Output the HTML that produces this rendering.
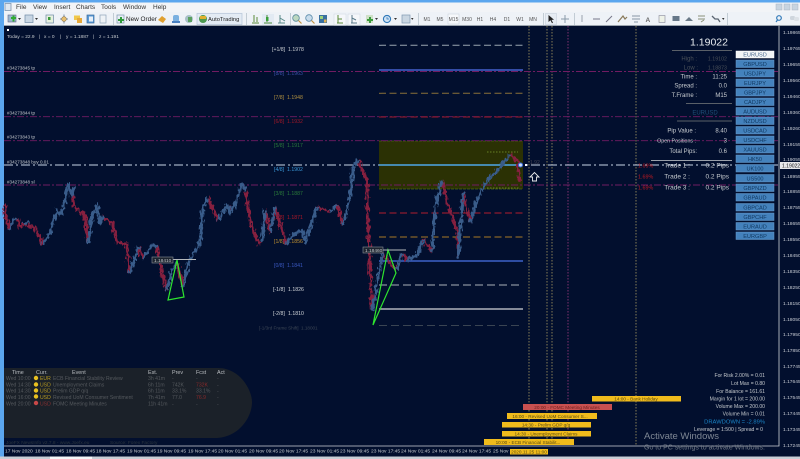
<!DOCTYPE html>
<html><head><meta charset="utf-8"><style>
html,body{margin:0;padding:0;background:#020f2e;overflow:hidden}
svg{display:block;filter:blur(.3px)}
text{font-family:"Liberation Sans",sans-serif}
.m{font-size:6.5px;fill:#333}
.ax{font-family:"Liberation Serif",serif;font-size:4.9px;fill:#c8ccd4}
.t{font-size:4.9px;fill:#c8ccd0;font-family:"Liberation Serif",serif}
.p{font-size:6px;fill:#c8ccd0}
.tf{font-size:5px;fill:#555;text-anchor:middle}
.b{font-size:5.6px;fill:#123a63;text-anchor:middle}
.bar{font-size:4.7px;fill:#5a4a10;text-anchor:middle}
.s{font-size:5.1px;fill:#c4c8cc;text-anchor:end}
.n{font-size:5.1px;fill:#55595e}
.nh{font-size:5.4px;fill:#b8bcc0}
.mu{font-size:5.2px}
</style></head><body>
<svg width="800" height="459" viewBox="0 0 800 459" xmlns="http://www.w3.org/2000/svg">
<defs><filter id="j" x="0" y="100" width="560" height="260" filterUnits="userSpaceOnUse" color-interpolation-filters="sRGB"><feTurbulence type="fractalNoise" baseFrequency="0.45 0.2" numOctaves="2" seed="4"/><feDisplacementMap in="SourceGraphic" scale="7" xChannelSelector="R" yChannelSelector="G"/></filter></defs>
<rect width="800" height="459" fill="#020f2e"/>
<rect width="800" height="2.500" fill="#5ba6ee"/>
<rect y="2.500" width="800" height="10" fill="#f2f4f7"/>
<rect y="12" width="800" height="13.500" fill="#eef2f7"/>
<rect y="25" width="800" height="1" fill="#9aa3ad"/>
<rect y="0" width="4" height="459" fill="#5ba6ee"/>
<text x="16" y="9" class="m">File</text><text x="33" y="9" class="m">View</text><text x="54" y="9" class="m">Insert</text><text x="76" y="9" class="m">Charts</text><text x="101" y="9" class="m">Tools</text><text x="123" y="9" class="m">Window</text><text x="153" y="9" class="m">Help</text>
<rect x="5" y="3.500" width="6" height="7" fill="#dfe7f0" stroke="#7f96b0" stroke-width=".8"/>
<!-- toolbar icons -->
<g>
<rect x="8" y="15" width="8" height="7" fill="#9cb8cf" stroke="#668" stroke-width=".6"/><path d="M11 17h5v2h-5zM12.500 15.500h2v6h-2z" fill="#2faa2f"/><path d="M18 18h3l-1.500 2z" fill="#333"/>
<rect x="25" y="15" width="8" height="7.500" fill="#c8d6e4" stroke="#6f8aa5" stroke-width=".7"/><path d="M35 18h3l-1.500 2z" fill="#333"/>
<rect x="46" y="15" width="7.500" height="8" fill="#e6f0e0" stroke="#6f8aa5" stroke-width=".7"/><rect x="48" y="17" width="2.500" height="3" fill="#3a9a3a"/>
<path d="M64 14.500v9M60 19h8" stroke="#7a8fa5" stroke-width="1"/><circle cx="64" cy="19" r="2.300" fill="#e8c070" stroke="#8a7040" stroke-width=".6"/>
<rect x="74" y="15.500" width="6" height="4.500" fill="#f0c84a"/><rect x="77" y="18" width="5" height="5" fill="#e6a83a"/>
<rect x="87" y="15" width="7" height="8" fill="#5a9ad8" stroke="#3a6a9a" stroke-width=".7"/><rect x="89" y="16.500" width="4" height="5" fill="#e8f0f8"/>
<rect x="100" y="15" width="6" height="8" fill="#eef2f6" stroke="#8fa3b8" stroke-width=".7"/>
<rect x="113" y="13" width=".8" height="12" fill="#b8c2cc"/>
<rect x="117" y="15" width="7" height="8" fill="#e6eef4" stroke="#7f96b0" stroke-width=".7"/><path d="M118 19h6v2h-6zM120 17h2v6h-2z" fill="#2f9a3a"/>
<text x="126" y="21" font-size="6.400" fill="#222">New Order</text>
<path d="M158 20l4-4 4 3-3 4z" fill="#e0a030"/><rect x="173" y="15" width="6" height="7" rx="2" fill="#7ab0e0"/><rect x="172" y="21" width="8" height="2" fill="#4a80c0"/>
<circle cx="189" cy="19" r="4" fill="#a8c0c8"/><rect x="188" y="17" width="4" height="5" fill="#5aa060"/>
<rect x="197" y="13.500" width="45" height="11" fill="#e3ebf4" stroke="#b4c4d6" stroke-width=".7"/>
<circle cx="203" cy="19" r="4" fill="#4d9a50"/><path d="M200 16h6v3h-6z" fill="#e0b030"/>
<text x="208" y="21" font-size="5.800" fill="#222">AutoTrading</text>
<rect x="246" y="13" width=".8" height="12" fill="#b8c2cc"/>
<path d="M252 23h7M254 15v7M257 17v5" stroke="#5a8a3a" stroke-width="1" fill="none"/>
<rect x="262" y="14" width="12" height="11" fill="#e2eaf3"/><path d="M264 23h8M267 15v7" stroke="#4a8a3a" stroke-width="1"/><rect x="266" y="17" width="2.500" height="4" fill="#3aa03a"/>
<path d="M278 23h7M280 15v8M280 18l5 3" stroke="#5a8a8a" stroke-width="1" fill="none"/>
<rect x="290" y="13" width=".8" height="12" fill="#b8c2cc"/>
<circle cx="296" cy="18" r="3.300" fill="#bcd8c0" stroke="#5a8a9a" stroke-width=".8"/><path d="M298.500 20.500l3 3" stroke="#c09040" stroke-width="1.200"/>
<circle cx="309" cy="18" r="3.300" fill="#c8dcec" stroke="#5a8aaa" stroke-width=".8"/><path d="M311.500 20.500l3 3" stroke="#c09040" stroke-width="1.200"/>
<rect x="319" y="15" width="8" height="8" fill="#3a70a0"/><rect x="320" y="16" width="3" height="3" fill="#9ad07a"/><rect x="324" y="19.500" width="2.500" height="3" fill="#e0b050"/>
<rect x="334" y="14" width="12" height="11" fill="#f5f7fa" stroke="#ccd6e0" stroke-width=".5"/><path d="M337 23h6M338 15v8M338 19h4" stroke="#5a8a3a" stroke-width="1" fill="none"/>
<rect x="348" y="14" width="12" height="11" fill="#f5f7fa" stroke="#ccd6e0" stroke-width=".5"/><path d="M351 23h6M352 15v8M352 18l4 2" stroke="#5a7a8a" stroke-width="1" fill="none"/>
<rect x="366" y="15" width="7" height="8" fill="#cfe0c8"/><path d="M367 19h6v2h-6zM369 17h2v6h-2z" fill="#3a9a3a"/><path d="M375 18h3l-1.500 2z" fill="#333"/>
<circle cx="387" cy="19" r="3.600" fill="#cfe2f4" stroke="#2f78b8" stroke-width="1.100"/><path d="M387 17v2h2" stroke="#2f78b8" stroke-width=".7" fill="none"/><path d="M394 18h3l-1.500 2z" fill="#333"/>
<rect x="402" y="15" width="8" height="8" fill="#c9d6e2" stroke="#7f96b0" stroke-width=".7"/><path d="M411 18h2.500l-1.200 2z" fill="#333"/>
<rect x="418" y="13" width=".8" height="12" fill="#b8c2cc"/>
<rect x="448" y="14" width="11" height="10" fill="#f6f8fb" stroke="#c4ced9" stroke-width=".5"/>
<rect x="543" y="13" width=".8" height="12" fill="#b8c2cc"/>
<rect x="545.500" y="13.500" width="11" height="11" fill="#e6ecf3" stroke="#c0cad6" stroke-width=".5"/><path d="M548.500 15v7l2-1.800 1.500 3 1-.5-1.500-2.800 2.500-.2z" fill="#222"/>
<path d="M565 15v8M561 19h8" stroke="#8a9aa8" stroke-width="1"/>
<rect x="574" y="13" width=".8" height="12" fill="#b8c2cc"/>
<path d="M582 15v7" stroke="#99a3ad"/><path d="M593 19h7" stroke="#778" stroke-width="1"/><path d="M606 22l6-6" stroke="#778" stroke-width="1"/>
<path d="M618 22l5-6 2 3 2-2" stroke="#8a7a5a" stroke-width="1.200" fill="none"/>
<path d="M632 16h8M632 19h8M634 22h4" stroke="#8896a5" stroke-width="1"/>
<text x="645.500" y="22" font-size="6.500" fill="#666" font-weight="bold">A</text>
<rect x="659" y="15.500" width="6" height="7" fill="#eef2e8" stroke="#889" stroke-width=".6"/>
<rect x="672.500" y="16" width="7" height="5" fill="#667788"/><path d="M685 21l4-4 4 4z" fill="#6b7a88"/>
<path d="M698 16h7M698 19h7M701 22l3-2" stroke="#8a9078" stroke-width="1" fill="none"/>
<path d="M712 16l3 3 3 0 2 3" stroke="#5a6470" stroke-width="1.300" fill="none"/><path d="M722 18h2.500l-1.200 2z" fill="#333"/>
<rect x="727" y="13" width=".8" height="12" fill="#b8c2cc"/>
<circle cx="779" cy="18" r="2.300" fill="none" stroke="#2f78b8" stroke-width="1.200"/><path d="M777.500 20l-1.500 2" stroke="#2f78b8" stroke-width="1.200"/>
<rect x="790" y="16" width="5" height="4" rx="1.500" fill="#cfd6dd"/><rect x="794" y="17" width="5" height="4" rx="1.500" fill="#dde2e7"/>
</g>
<g fill="#c8d4e0" stroke="#a8b4c2" stroke-width=".5"><rect x="776" y="4" width="6" height="6"/><rect x="784" y="4" width="6" height="6"/><rect x="792" y="4" width="6" height="6"/></g>
<text x="427" y="21" class="tf">M1</text><text x="440" y="21" class="tf">M5</text><text x="453.500" y="21" class="tf">M15</text><text x="467" y="21" class="tf">M30</text><text x="480" y="21" class="tf">H1</text><text x="493" y="21" class="tf">H4</text><text x="507" y="21" class="tf">D1</text><text x="520" y="21" class="tf">W1</text><text x="533" y="21" class="tf">MN</text>

<!-- news panel -->
<path d="M4 368H218C240 368 252 390 252 402C252 418 238 438 215 438H4Z" fill="#1b2129"/>

<!-- olive rect -->
<rect x="379" y="141" width="144" height="48" fill="#2b3104"/>
<path d="M379 141H523M379 189H523" stroke="#4d6a14" stroke-width=".8" stroke-dasharray="3 1"/>

<!-- vertical lines -->
<g fill="none" stroke-width=".8" stroke-dasharray="1.500 1.500">
<path d="M529 26V445M547 26V445M552 26V445M636 26V445" stroke="#a89a60"/>
<path d="M568 26V445" stroke="#a03a80"/>
</g>

<!-- horizontal order lines -->
<g fill="none" stroke-width=".9" stroke-dasharray="7 2 2 2">
<path d="M4 71.500H779M4 116.700H779M4 140.700H779M4 185H779" stroke="#701c62"/>
</g>
<path d="M4 165H779" fill="none" stroke="#c8d4e6" stroke-width=".9" stroke-dasharray="9 3 2 3"/>
<g font-size="4.600" fill="#c4c8cc"><text x="7" y="69.500">#34273845 tp</text><text x="7" y="114.500">#34273844 tp</text><text x="7" y="138.500">#34273843 tp</text><text x="7" y="163.500">#34273848 buy 0.01</text><text x="7" y="183.500">#34273848 sl</text></g>

<!-- murrey lines -->
<g fill="none">
<path d="M379 45.300H523" stroke="#9aa5b0" stroke-dasharray="7 3.500"/>
<path d="M379 70H523" stroke="#3c55b8" stroke-width="1.800"/>
<path d="M379 93.300H523" stroke="#8a7038" stroke-dasharray="7 3.500"/>
<path d="M379 117H523" stroke="#a01a2a" stroke-dasharray="7 3.500"/>
<path d="M379 165H523" stroke="#4ea8e8" stroke-width="1.500"/>
<path d="M379 213H523" stroke="#b01e2e" stroke-dasharray="7 3.500"/>
<path d="M379 237H523" stroke="#a87a26" stroke-dasharray="7 3.500"/>
<path d="M379 261H523" stroke="#3c62c8" stroke-width="1.600"/>
<path d="M379 285H523" stroke="#aab0b8" stroke-dasharray="8 4"/>
<path d="M379 309H523" stroke="#b0b4bc" stroke-width="1.600"/>
<path d="M379 325.500H523" stroke="#3a4452" stroke-dasharray="8 4"/>
<path d="M487 152H518M487 188H520" stroke="#7a9a30" stroke-width=".7" stroke-dasharray="1.500 1.500"/>
</g>
<g class="mu">
<text y="51" fill="#c8ccd0"><tspan x="272">[+1/8]</tspan><tspan x="288">1.1978</tspan></text>
<text y="75" fill="#3a50a8"><tspan x="274">[8/8]</tspan><tspan x="287">1.1963</tspan></text>
<text y="99" fill="#b09040"><tspan x="274">[7/8]</tspan><tspan x="287">1.1948</tspan></text>
<text y="123" fill="#a01828"><tspan x="274">[6/8]</tspan><tspan x="287">1.1932</tspan></text>
<text y="147" fill="#2a7a3a"><tspan x="274">[5/8]</tspan><tspan x="287">1.1917</tspan></text>
<text y="171" fill="#3a98d8"><tspan x="274">[4/8]</tspan><tspan x="287">1.1902</tspan></text>
<text y="195" fill="#2a7a3a"><tspan x="274">[3/8]</tspan><tspan x="287">1.1887</tspan></text>
<text y="219" fill="#b01828"><tspan x="274">[2/8]</tspan><tspan x="287">1.1871</tspan></text>
<text y="243" fill="#c09030"><tspan x="274">[1/8]</tspan><tspan x="287">1.1856</tspan></text>
<text y="267" fill="#3a58c0"><tspan x="274">[0/8]</tspan><tspan x="287">1.1841</tspan></text>
<text y="291" fill="#d0d4d8"><tspan x="273">[-1/8]</tspan><tspan x="288">1.1826</tspan></text>
<text y="315" fill="#d0d4d8"><tspan x="273">[-2/8]</tspan><tspan x="288">1.1810</tspan></text>
<text y="329.500" fill="#3c4655" font-size="4.600"><tspan x="259">[-1/3rd Frame Shift]</tspan><tspan x="301">1.18001</tspan></text>
</g>

<!-- price -->
<g fill="none" stroke-width="3" stroke-linejoin="round" stroke-linecap="butt" filter="url(#j)">
<g stroke="#85203f">
<path d="M5 205L6 217L9 230M17 218L20 227L24 224L35 228L43 245"/>
<path d="M72 195L74 205L80 213L84 212L88 243"/>
<path d="M103 217L112 223L117 243L127 243L129 273"/>
<path d="M138 247L143 258M157 247L162 273L167 290M177 262L183 287"/>
<path d="M208 198L218 220M230 213L228 206M245 190L250 220L258 243L262 242"/>
<path d="M265 210L270 233M275 208L287 245"/>
<path d="M317 207L330 212M337 205L343 225"/>
<path d="M358 160L367 180L368 230L372 310"/>
<path d="M383 253L390 263L397 270M402 253L407 260M423 240L432 252"/>
<path d="M442 180L447 203L457 230L458 258"/>
<path d="M463 193L470 222"/>
<path d="M510 155L517 160L520 182"/>
</g>
<g stroke="#395c8a">
<path d="M9 230L13 220L17 218M24 224L28 222"/>
<path d="M43 245L50 232L57 210L60 214L62 213L68 185L72 195L74 187"/>
<path d="M88 243L92 217L97 205L100 223L103 217"/>
<path d="M129 273L135 260L138 247M143 258L152 245L157 247"/>
<path d="M167 290L172 270L177 262M183 287L188 263L200 243L203 207L208 198"/>
<path d="M218 220L227 205L230 213L237 200L242 183L245 190"/>
<path d="M262 242L265 210M270 233L275 208M287 245L290 237L302 230L305 243L317 207"/>
<path d="M330 212L337 205M343 225L350 197L353 167L358 160"/>
<path d="M372 310L378 277L383 253M397 270L402 253M407 260L417 255L423 240"/>
<path d="M432 252L435 207L442 180M458 258L463 193M470 222L477 200L483 187L490 178L500 167L510 155"/>
</g>
</g>

<!-- triangles -->
<g fill="none" stroke="#2ee62e" stroke-width="1.200">
<path d="M168 300L177 260L184 297Z"/>
<path d="M373 325L388 250L396 273Z"/>
</g>
<path d="M173 259.500H196M383 250H406" stroke="#b4b8bc"/>
<rect x="152" y="257" width="21" height="6" fill="#1c2430" stroke="#8a9098" stroke-width=".6"/>
<text x="154" y="262" font-size="4.800" fill="#c0c4c8">1.18410</text>
<rect x="363" y="247" width="20" height="6" fill="#1c2430" stroke="#8a9098" stroke-width=".6"/>
<text x="365" y="252" font-size="4.800" fill="#c0c4c8">1.18460</text>

<circle cx="520.500" cy="165" r="2" fill="#cde" stroke="#3a6ae0"/>
<rect x="525" y="164" width="2" height="2" fill="#fff"/>
<text x="530" y="164" font-size="5" fill="#445">1.92</text>
<path d="M534.500 172.500l-4.500 4.500h2.500v4h4v-4h2.500z" fill="#020f2e" stroke="#e8eaec" stroke-width=".9"/>

<!-- info top-left -->
<rect x="7" y="29" width="2" height="2" fill="#fff"/>
<g font-size="4.800" fill="#c8ccd0"><text x="7" y="38">Today = 22.9</text><text x="39" y="38">|</text><text x="44" y="38">x = 0</text><text x="60" y="38">|</text><text x="66" y="38">y = 1.1887</text><text x="93" y="38">|</text><text x="99" y="38">z = 1.191</text></g>

<!-- right panel -->
<text x="709" y="45.500" font-size="10.500" fill="#e8ecf0" text-anchor="middle">1.19022</text>
<g fill="#5a6068"><rect x="672" y="50" width="60" height="1"/><rect x="686" y="103" width="46" height="1"/><rect x="677" y="120.500" width="55" height="1"/></g>
<rect x="651" y="160" width="81" height=".8" fill="#c0c4c8"/>
<g class="p" text-anchor="end">
<text x="697" y="60.500" fill="#4a5058">High :</text><text x="698" y="69.500" fill="#4a5058">Low :</text>
<text x="697" y="78.500">Time :</text><text x="697" y="87.500">Spread :</text><text x="697" y="97">T.Frame :</text>
<text x="696" y="132.500">Pip Value :</text><text x="696" y="142.500" font-size="5.300">Open Positions :</text><text x="697" y="153">Total Pips:</text>
<text x="690" y="167.500" font-size="6.500">Trade 1 :</text><text x="690" y="178.500" font-size="6.500">Trade 2 :</text><text x="690" y="189.500" font-size="6.500">Trade 3 :</text>
</g>
<g class="p" text-anchor="end">
<text x="727" y="60.500" fill="#4a5058" font-size="5.300">1.19102</text><text x="727" y="69.500" fill="#4a5058" font-size="5.300">1.18873</text>
<text x="727" y="78.500">11:25</text><text x="727" y="87.500">0.0</text><text x="727" y="97">M15</text>
<text x="727" y="132.500">8.40</text><text x="727" y="142.500">3</text><text x="727" y="153">0.6</text>
<text x="729" y="167.500" font-size="6.500">0.2 Pips</text><text x="729" y="178.500" font-size="6.500">0.2 Pips</text><text x="729" y="189.500" font-size="6.500">0.2 Pips</text>
</g>
<text x="705" y="114.500" font-size="6" fill="#1f4f78" text-anchor="middle">EURUSD</text>
<g font-size="5.400" fill="#c01a22"><text x="638" y="167.500">1.69%</text><text x="638" y="178.500">1.69%</text><text x="638" y="189.500">1.69%</text></g>

<!-- buttons -->
<g fill="#4482bd" stroke="#6a9ccb" stroke-width=".5">
<rect x="736" y="51" width="38" height="7" fill="#f2f4f6" stroke="#fff"/>
<rect x="736" y="60" width="38" height="7.500"/><rect x="736" y="69.500" width="38" height="7.500"/><rect x="736" y="79" width="38" height="7.500"/><rect x="736" y="88.500" width="38" height="7.500"/><rect x="736" y="98" width="38" height="7.500"/><rect x="736" y="107.500" width="38" height="7.500"/><rect x="736" y="117" width="38" height="7.500"/><rect x="736" y="126.500" width="38" height="7.500"/><rect x="736" y="136" width="38" height="7.500"/><rect x="736" y="145.500" width="38" height="7.500"/><rect x="736" y="155" width="38" height="7.500"/><rect x="736" y="164.500" width="38" height="7.500"/><rect x="736" y="174.500" width="38" height="7.500"/><rect x="736" y="184" width="38" height="7.500"/><rect x="736" y="193.500" width="38" height="7.500"/><rect x="736" y="203.500" width="38" height="7.500"/><rect x="736" y="213" width="38" height="7.500"/><rect x="736" y="222.500" width="38" height="7.500"/><rect x="736" y="232" width="38" height="7.500"/>
</g>
<g class="b">
<text x="755" y="56.500" fill="#4a6a90">EURUSD</text><text x="755" y="66">GBPUSD</text><text x="755" y="75.500">USDJPY</text><text x="755" y="85">EURJPY</text><text x="755" y="94.500">GBPJPY</text><text x="755" y="104">CADJPY</text><text x="755" y="113.500">AUDUSD</text><text x="755" y="123">NZDUSD</text><text x="755" y="132.500">USDCAD</text><text x="755" y="142">USDCHF</text><text x="755" y="151.500">XAUUSD</text><text x="755" y="161">HK50</text><text x="755" y="170.500">UK100</text><text x="755" y="180.500">US500</text><text x="755" y="190">GBPNZD</text><text x="755" y="199.500">GBPAUD</text><text x="755" y="209.500">GBPCAD</text><text x="755" y="219">GBPCHF</text><text x="755" y="228.500">EURAUD</text><text x="755" y="238">EURGBP</text>
</g>

<!-- axis -->
<path d="M779 26V446H4" fill="none" stroke="#d0d4d8" stroke-width=".8"/>
<g class="ax">
<text x="783" y="34">1.19865</text><text x="783" y="50">1.19765</text><text x="783" y="66">1.19655</text><text x="783" y="82">1.19560</text><text x="783" y="98">1.19460</text><text x="783" y="114">1.19360</text><text x="783" y="130">1.19260</text><text x="783" y="146">1.19155</text><text x="783" y="161">1.19055</text><text x="783" y="178">1.18955</text><text x="783" y="193">1.18855</text><text x="783" y="209">1.18755</text><text x="783" y="225">1.18655</text><text x="783" y="241">1.18550</text><text x="783" y="257">1.18450</text><text x="783" y="273">1.18350</text><text x="783" y="289">1.18250</text><text x="783" y="305">1.18150</text><text x="783" y="321">1.18050</text><text x="783" y="336">1.17950</text><text x="783" y="352">1.17850</text><text x="783" y="368">1.17745</text><text x="783" y="383">1.17645</text><text x="783" y="399">1.17545</text><text x="783" y="415">1.17445</text><text x="783" y="431">1.17345</text><text x="783" y="447">1.17245</text>
</g>
<rect x="780" y="162" width="20" height="7" fill="#e8e8ec"/><text x="782" y="167.500" font-size="5" fill="#111" font-family="Liberation Serif">1.19022</text>

<g class="t">
<text x="5" y="452.500">17 Nov 2020</text><text x="35" y="452.500">18 Nov 01:45</text><text x="66" y="452.500">18 Nov 09:45</text><text x="96" y="452.500">18 Nov 17:45</text><text x="127" y="452.500">19 Nov 01:45</text><text x="157" y="452.500">19 Nov 09:45</text><text x="188" y="452.500">19 Nov 17:45</text><text x="218" y="452.500">20 Nov 01:45</text><text x="249" y="452.500">20 Nov 09:45</text><text x="279" y="452.500">20 Nov 17:45</text><text x="310" y="452.500">23 Nov 01:45</text><text x="340" y="452.500">23 Nov 09:45</text><text x="371" y="452.500">23 Nov 17:45</text><text x="401" y="452.500">24 Nov 01:45</text><text x="432" y="452.500">24 Nov 09:45</text><text x="462" y="452.500">24 Nov 17:45</text><text x="493" y="452.500">25 Nov</text>
</g>
<rect x="0" y="456.500" width="800" height="2.500" fill="#c8ced6"/><rect x="50" y="456.500" width="42" height="2.500" fill="#f4f6f8"/>

<!-- news -->
<g class="nh"><text x="12" y="374">Time</text><text x="36" y="374">Curr.</text><text x="72" y="374">Event</text><text x="148" y="374">Est.</text><text x="172" y="374">Prev</text><text x="196" y="374">Fcst</text><text x="217" y="374">Act</text></g>
<g fill="#e8c020"><circle cx="36" cy="378" r="2.200"/><circle cx="36" cy="384.500" r="2.200"/><circle cx="36" cy="390.500" r="2.200"/><circle cx="36" cy="396.500" r="2.200"/></g><circle cx="36" cy="403" r="2.200" fill="#c84848"/>
<g class="n">
<text x="6" y="380">Wed 10:00</text><text x="40" y="380" fill="#b89a20">EUR</text><text x="53" y="380">ECB Financial Stability Review</text><text x="148" y="380">3h 41m</text><text x="172" y="380">-</text><text x="196" y="380">-</text><text x="217" y="380">-</text>
<text x="6" y="386.500">Wed 14:30</text><text x="40" y="386.500" fill="#b89a20">USD</text><text x="53" y="386.500">Unemployment Claims</text><text x="148" y="386.500">6h 11m</text><text x="172" y="386.500">742K</text><text x="196" y="386.500" fill="#8a2a2a">732K</text><text x="217" y="386.500">-</text>
<text x="6" y="392.500">Wed 14:30</text><text x="40" y="392.500" fill="#b89a20">USD</text><text x="53" y="392.500">Prelim GDP q/q</text><text x="148" y="392.500">6h 11m</text><text x="172" y="392.500">33.1%</text><text x="196" y="392.500">33.1%</text><text x="217" y="392.500">-</text>
<text x="6" y="399">Wed 16:00</text><text x="40" y="399" fill="#b89a20">USD</text><text x="53" y="399">Revised UoM Consumer Sentiment</text><text x="148" y="399">7h 41m</text><text x="172" y="399">77.0</text><text x="196" y="399" fill="#8a2a2a">76.9</text><text x="217" y="399">-</text>
<text x="6" y="405.500">Wed 20:00</text><text x="40" y="405.500" fill="#8a3030">USD</text><text x="53" y="405.500">FOMC Meeting Minutes</text><text x="148" y="405.500">11h 41m</text><text x="172" y="405.500">-</text><text x="196" y="405.500">-</text><text x="217" y="405.500">-</text>
<text x="6" y="444" font-size="4.800" fill="#2c3640">JoeFX NewsInfo v2.7.8  -  www.Joefx.eu</text><text x="110" y="444" font-size="4.800" fill="#2c3640">Source: Forex Factory</text>
</g>

<!-- bars -->
<g fill="#f0bb1c"><rect x="592" y="396" width="89" height="5.500"/><rect x="507" y="413" width="90" height="6"/><rect x="502" y="422" width="89" height="5.500"/><rect x="502" y="431" width="89" height="5.500"/><rect x="484" y="439" width="90" height="6"/><rect x="510" y="449" width="38" height="5.500"/></g>
<rect x="523" y="404" width="89" height="6" fill="#c85050"/>
<g class="bar"><text x="636" y="400.500">14:00 - Bank Holiday</text><text x="567" y="409" fill="#702020">20:00 - FOMC Meeting Minutes</text><text x="550" y="418">16:00 - Revised UoM Consumer S...</text><text x="546" y="426.500">14:30 - Prelim GDP q/q</text><text x="546" y="435.500">14:30 - Unemployment Claims</text><text x="528" y="444">10:00 - ECB Financial Stabilit...</text><text x="529" y="453.500">2020.11.25 11:00</text></g>

<!-- stats -->
<g class="s"><text x="765" y="377">For Risk 2.00% = 0.01</text><text x="765" y="385">Lot Max = 0.80</text><text x="765" y="393">For Balance = 161.61</text><text x="765" y="400.500">Margin for 1 lot = 200.00</text><text x="765" y="408">Volume Max = 200.00</text><text x="765" y="415.500">Volume Min = 0.01</text><text x="765" y="423.500" fill="#1a86c8" font-size="5.800">DRAWDOWN = -2.89%</text><text x="763" y="431">Leverage = 1:500 | Spread = 0</text></g>

<text x="644" y="439" font-size="9.500" fill="#7e8794">Activate Windows</text>
<text x="644" y="449.500" font-size="7" fill="#6e7784">Go to PC settings to activate Windows.</text>
</svg>
</body></html>
